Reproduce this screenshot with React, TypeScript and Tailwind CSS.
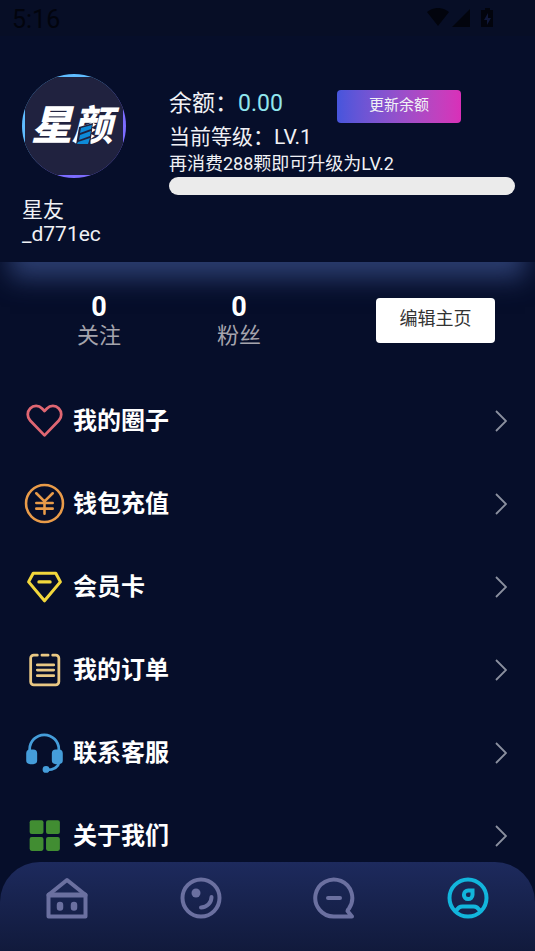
import type { ReactNode } from "react";

const menu: { label: string; icon: ReactNode }[] = [
  {
    label: "我的圈子",
    icon: (
      <path
        d="M20 34.500 6 20a8.500 8.500 0 0 1 0-11.700 8 8 0 0 1 11.600 0L20 10.800l2.400-2.500a8 8 0 0 1 11.600 0A8.500 8.500 0 0 1 34 20Z"
        stroke="#df6672"
        strokeWidth="2.700"
      />
    ),
  },
  {
    label: "钱包充值",
    icon: (
      <g stroke="#e99b49" strokeWidth="2.500">
        <circle cx="20" cy="20" r="18" />
        <path d="m12 10 8 8 8-8M20 18v12M12 19.500h16M12 25h16" />
      </g>
    ),
  },
  {
    label: "会员卡",
    icon: (
      <g stroke="#f2d73c" strokeWidth="3">
        <path d="M9 7h22l4.500 8.500L20 34 4.500 15.500Z" />
        <path d="M14.500 15.500h11" />
      </g>
    ),
  },
  {
    label: "我的订单",
    icon: (
      <g stroke="#e9c884" strokeWidth="2.700">
        <path d="M13 6H9.500a3 3 0 0 0-3 3v23a3 3 0 0 0 3 3H31a3 3 0 0 0 3-3V9a3 3 0 0 0-3-3h-3M17.500 6h6" />
        <path d="M13 15.500h16M13 20.500h16M13 26h16" />
      </g>
    ),
  },
  {
    label: "联系客服",
    icon: (
      <g stroke="#459dda" strokeWidth="2.700">
        <path d="M5.500 18v-1a14 14 0 0 1 28.500 0v1M34.500 29c-1 5-5 8-12.500 8" />
        <rect x="3.500" y="18.500" width="8" height="11.500" rx="2.500" fill="#459dda" />
        <rect x="28.500" y="18.500" width="8" height="11.500" rx="2.500" fill="#459dda" />
        <circle cx="21.500" cy="36.500" r="2" fill="#459dda" />
      </g>
    ),
  },
  {
    label: "关于我们",
    icon: (
      <g fill="#418d32">
        <rect x="5.500" y="5" width="13.500" height="13.500" rx="2" />
        <rect x="21.500" y="5" width="13.500" height="13.500" rx="2" />
        <rect x="5.500" y="21.500" width="13.500" height="13.500" rx="2" />
        <rect x="21.500" y="21.500" width="13.500" height="13.500" rx="2" />
      </g>
    ),
  },
];

const tabs: { label: string; active?: boolean; icon: ReactNode }[] = [
  {
    label: "首页",
    icon: (
      <>
        <path d="M2.500 18h37v21.500h-37ZM3 17.500 21 3l18 14.500" />
        <path d="M3 18h36" strokeWidth="5" />
        <path d="M14 28v2.500M28 28v2.500" strokeWidth="6.500" />
      </>
    ),
  },
  {
    label: "发现",
    icon: (
      <>
        <circle cx="21" cy="21" r="18.500" />
        <circle cx="16" cy="16" r="4.500" fill="currentColor" stroke="none" />
        <path d="M31.500 20a10.500 10.500 0 0 1-10.500 10.500" />
      </>
    ),
  },
  {
    label: "消息",
    icon: (
      <>
        <path d="M21 39.500h18l-4.500-5.500c0-1 1-2 1.500-2.500A18.500 18.500 0 1 0 21 39.500Z" />
        <path d="M15 21h12" />
      </>
    ),
  },
  {
    label: "我的",
    active: true,
    icon: (
      <>
        <circle cx="21" cy="21" r="18.500" />
        <path d="M25.500 13.500V18a4.300 4.300 0 1 1-4.300-4.500Z" strokeLinejoin="miter" />
        <path d="m9.500 33 2.500-2.500q1.500-1 3.500-1h11q2 0 3.500 1l2.500 2.500" />
      </>
    ),
  },
];

function StatusBar() {
  return (
    <div className="flex h-9 items-center justify-between bg-[#070e26] pr-10 pb-px pl-3 text-[#02040d]">
      <span className="pt-1 text-[25px] leading-8">5:16</span>
      <svg className="h-5 w-[68px]" viewBox="0 0 68 20" fill="currentColor">
        <path d="M0 4a17 17 0 0 1 22 0L11 18ZM43 1v18H25ZM58 0h5v2h3v17H54V2h4Z" />
        <path d="M61 5v5h3l-4 7v-5h-3Z" fill="#10183a" />
      </svg>
    </div>
  );
}

function Avatar() {
  return (
    <div className="size-[104px] overflow-hidden rounded-full bg-linear-to-br from-[#5fbcff] from-40% to-[#7c6cff] to-60% p-[3px]">
      <div className="relative flex size-full items-center justify-center bg-[#20223f] pr-1">
        <span className="text-[41px] leading-none font-black whitespace-nowrap text-white italic">
          星颜
        </span>
        <svg className="absolute top-[46px] left-[51px] h-[22px] w-[17px]" viewBox="0 0 17 22">
          <path d="m3 4 14-4-3 22H0Z" fill="#20223f" />
          <path
            d="m5 5 11-3-1 4L4 10ZM4 12l11-4-1 5-11 4ZM2 19l12-4-2 6H1Z"
            fill="#0e8bd8"
          />
        </svg>
      </div>
    </div>
  );
}

function Profile() {
  return (
    <section className="flex h-[226px] items-start gap-[43px] pt-[38px] pr-5 pl-[22px] shadow-[0_26px_24px_-10px_#2c3e70]">
      <div className="w-[104px] shrink-0">
        <Avatar />
        <p className="mt-5 text-[21px] leading-6">
          星友
          <br />
          _d771ec
        </p>
      </div>
      <div className="flex-1 pt-[13px]">
        <div className="flex items-start">
          <p className="w-[168px] text-[23px] leading-[34px]">
            余额：<span className="text-[#91e6ee]">0.00</span>
          </p>
          <button className="mt-[3px] h-[33px] w-[124px] rounded bg-linear-to-r from-[#4655dc] to-[#d92fb8] pb-[2px] text-[15px]">
            更新余额
          </button>
        </div>
        <p className="text-[21px] leading-7">当前等级：LV.1</p>
        <p className="text-lg leading-[26px]">再消费288颗即可升级为LV.2</p>
        <div className="h-[18px] rounded-full bg-[#ebebeb]" />
      </div>
    </section>
  );
}

function Stat({ value, label }: { value: number; label: string }) {
  return (
    <div className="flex w-[140px] flex-col items-center">
      <span className="text-[27px] leading-[30px] font-bold text-white">{value}</span>
      <span className="text-[22px] leading-7 text-[#a5a4ad]">{label}</span>
    </div>
  );
}

export default function App() {
  return (
    <div className="min-h-screen bg-[#060e2a] pb-16 font-[Roboto,'Noto_Sans_CJK_SC',sans-serif] text-[#f0f1f5]">
      <StatusBar />
      <Profile />

      <section className="flex h-[117px] items-start pt-[30px] pr-10 pl-[29px]">
        <Stat value={0} label="关注" />
        <Stat value={0} label="粉丝" />
        <button className="mt-[6px] ml-auto h-[45px] w-[119px] rounded bg-white pb-[3px] text-lg text-[#333]">
          编辑主页
        </button>
      </section>

      <ul>
        {menu.map((item) => (
          <li key={item.label}>
            <a href="#" className="flex h-[83px] items-center pr-7 pl-6">
              <svg
                className="size-[41px]"
                viewBox="0 0 40 40"
                fill="none"
                strokeLinecap="round"
                strokeLinejoin="round"
              >
                {item.icon}
              </svg>
              <span className="ml-2 text-2xl font-bold text-white">{item.label}</span>
              <svg
                className="ml-auto h-[22px] w-3"
                viewBox="0 0 12 22"
                fill="none"
                stroke="#8b909f"
                strokeWidth="1.800"
              >
                <path d="m1 1 10 10L1 21" />
              </svg>
            </a>
          </li>
        ))}
      </ul>

      <nav className="fixed inset-x-0 bottom-0 grid h-[89px] grid-cols-4 rounded-t-[40px] bg-linear-to-b from-[#1d2a5d] to-[#111a3c]">
        {tabs.map((tab) => (
          <a
            key={tab.label}
            href="#"
            aria-label={tab.label}
            className={
              tab.active
                ? "flex justify-center pt-[15px] text-[#12b5dc]"
                : "flex justify-center pt-[15px] text-[#6b70a0]"
            }
          >
            <svg
              className="size-[42px]"
              viewBox="0 0 42 42"
              fill="none"
              stroke="currentColor"
              strokeWidth="4"
              strokeLinecap="round"
              strokeLinejoin="round"
            >
              {tab.icon}
            </svg>
          </a>
        ))}
      </nav>
    </div>
  );
}
